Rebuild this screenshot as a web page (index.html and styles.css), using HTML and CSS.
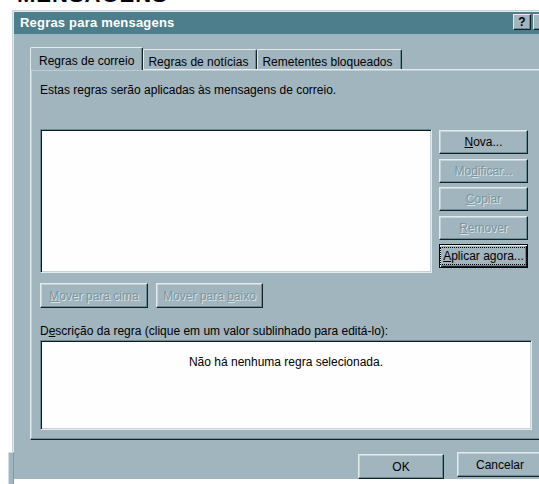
FILE: index.html
```html
<!DOCTYPE html>
<html lang="pt">
<head>
<meta charset="utf-8">
<title>Regras para mensagens</title>
<link rel="stylesheet" href="styles.css">
</head>
<body>
  <div class="banner"><span>MENSAGENS</span></div>
  <div class="backwin"></div>

  <div class="dialog">
    <div class="titlebar">
      <span class="title">Regras para mensagens</span>
      <div class="caption">
        <span class="cap-btn">?</span>
        <span class="cap-btn">&#215;</span>
      </div>
    </div>

    <div class="client">
      <div class="tabs">
        <div class="tab active">Regras de correio</div>
        <div class="tab">Regras de notícias</div>
        <div class="tab">Remetentes bloqueados</div>
      </div>

      <div class="panel">
        <p class="intro">Estas regras serão aplicadas às mensagens de correio.</p>

        <div class="rules-row">
          <div class="field rules-list"></div>
          <div class="side-btns">
            <button class="btn"><span><u>N</u>ova...</span></button>
            <button class="btn" disabled><span>Mo<u>d</u>ificar...</span></button>
            <button class="btn" disabled><span><u>C</u>opiar</span></button>
            <button class="btn" disabled><span><u>R</u>emover</span></button>
            <button class="btn default"><span class="focus"><u>A</u>plicar agora...</span></button>
          </div>
        </div>

        <div class="move-row">
          <button class="btn move-up" disabled><span><u>M</u>over para cima</span></button>
          <button class="btn move-down" disabled><span>Mover para <u>b</u>aixo</span></button>
        </div>

        <div class="desc-label">D<u>e</u>scrição da regra (clique em um valor sublinhado para editá-lo):</div>
        <div class="field desc-box">Não há nenhuma regra selecionada.</div>
      </div>

      <div class="footer">
        <button class="btn ok"><span>OK</span></button>
        <button class="btn cancel"><span>Cancelar</span></button>
      </div>
    </div>
  </div>
</body>
</html>
```
FILE: styles.css
```css
* {
  box-sizing: border-box;
}

html,
body {
  margin: 0;
  padding: 0;
}

body {
  width: 539px;
  height: 484px;
  overflow: hidden;
  position: relative;
  background: #ffffff;
  font-family: "Liberation Sans", Arial, sans-serif;
  font-size: 12px;
  line-height: 14px;
  color: #000;
}

/* heading of the page behind the dialog, mostly hidden */
.banner {
  height: 8px;
  margin-bottom: 2px;
  overflow: hidden;
  padding-left: 17px;
}

.banner span {
  display: block;
  margin-top: -20px;
  font: bold 22px/30px "Liberation Sans", Arial, sans-serif;
  letter-spacing: 1px;
  white-space: nowrap;
}

/* edge of another window peeking out at the bottom left */
.backwin {
  position: absolute;
  left: 8px;
  top: 452px;
  width: 6px;
  height: 40px;
  background: #a1b5bf;
  border-top: 1px solid #d3dee2;
  border-left: 1px solid #d3dee2;
  border-right: 1px solid #7f9ba5;
}

/* dialog window */
.dialog {
  width: 541px;
  margin-left: 12px;
  padding: 1px 0 0 1px;
  background: #a1b5bf;
  border-top: 1px solid #c4d2d7;
  border-left: 1px solid #c4d2d7;
  box-shadow: inset 1px 1px 0 #e3ebee;
}

.titlebar {
  display: flex;
  align-items: flex-start;
  height: 22px;
  background: #4d7e8c;
  color: #fff;
}

.title {
  padding-left: 6px;
  font-weight: bold;
  font-size: 13px;
  line-height: 22px;
  letter-spacing: 0.2px;
}

.caption {
  display: flex;
  gap: 2px;
  margin-left: auto;
  padding: 2px 2px 0 0;
}

.cap-btn {
  width: 18px;
  height: 16px;
  display: flex;
  align-items: center;
  justify-content: center;
  background: #a1b5bf;
  color: #000;
  font-weight: bold;
  font-size: 12px;
  border: 1px solid;
  border-color: #e3ebee #152226 #152226 #e3ebee;
  box-shadow: inset -1px -1px 0 #6d8b95;
}

.client {
  padding: 13px 0 0 16px;
}

/* tab strip */
.tabs {
  display: flex;
  align-items: flex-end;
  height: 22px;
  position: relative;
  z-index: 1;
}

.tab {
  height: 20px;
  padding: 5px 8px 0 4px;
  border-top: 1px solid #e3ebee;
  border-left: 1px solid #e3ebee;
  border-right: 1px solid #152226;
  border-radius: 2px 2px 0 0;
  box-shadow: inset -1px 0 0 #6d8b95;
  white-space: nowrap;
}

.tab.active {
  height: 23px;
  margin-bottom: -1px;
  padding: 6px 8px 0 8px;
  background: #a1b5bf;
}

/* tab page */
.panel {
  padding: 13px 0 9px 9px;
  border-top: 1px solid #e3ebee;
  border-left: 1px solid #e3ebee;
  border-bottom: 1px solid #152226;
  box-shadow: inset 0 -1px 0 #6d8b95, inset 1px 1px 0 #bfcdd3;
}

.intro {
  margin: 0;
}

.rules-row {
  display: flex;
  gap: 7px;
  margin-top: 32px;
  height: 144px;
}

.field {
  background: #fefefe;
  border: 1px solid;
  border-color: #6d8b95 #e3ebee #e3ebee #6d8b95;
  box-shadow: inset 1px 1px 0 #0f1b1f, inset -1px -1px 0 #c4d2d7;
}

.rules-list {
  width: 392px;
  height: 144px;
}

.side-btns {
  display: flex;
  flex-direction: column;
  gap: 4.5px;
  width: 89px;
  padding-top: 1px;
}

/* push buttons */
.btn {
  display: flex;
  align-items: center;
  justify-content: center;
  height: 24px;
  padding: 0;
  margin: 0;
  font: inherit;
  line-height: 14px;
  color: #000;
  background: #a1b5bf;
  border: 1px solid;
  border-color: #e3ebee #152226 #152226 #e3ebee;
  box-shadow: inset -1px -1px 0 #6d8b95, inset 1px 1px 0 #c4d2d7;
  white-space: nowrap;
}

.btn:disabled {
  color: #7a96a0;
  text-shadow: 1px 1px 0 #dbe5e8;
}

.btn.default {
  border-color: #000;
  box-shadow: inset 1px 1px 0 #e3ebee, inset -1px -1px 0 #152226, inset -2px -2px 0 #6d8b95;
}

.focus {
  padding: 0 1px;
  outline: 1px dotted #000;
  outline-offset: 1px;
}

.move-row {
  display: flex;
  gap: 8px;
  margin-top: 10px;
}

.move-row .btn {
  height: 25px;
}

.move-up {
  width: 108px;
}

.move-down {
  width: 107px;
}

.desc-label {
  margin-top: 16px;
}

.desc-box {
  width: 492px;
  height: 90px;
  margin-top: 2px;
  padding-top: 14px;
  text-align: center;
}

/* OK / Cancelar */
.footer {
  display: flex;
  align-items: flex-start;
  justify-content: flex-end;
  gap: 13px;
  margin-top: 12px;
  padding-right: 10px;
}

.footer .btn {
  width: 86px;
  height: 25px;
}

.footer .ok {
  margin-top: 2px;
}
```
